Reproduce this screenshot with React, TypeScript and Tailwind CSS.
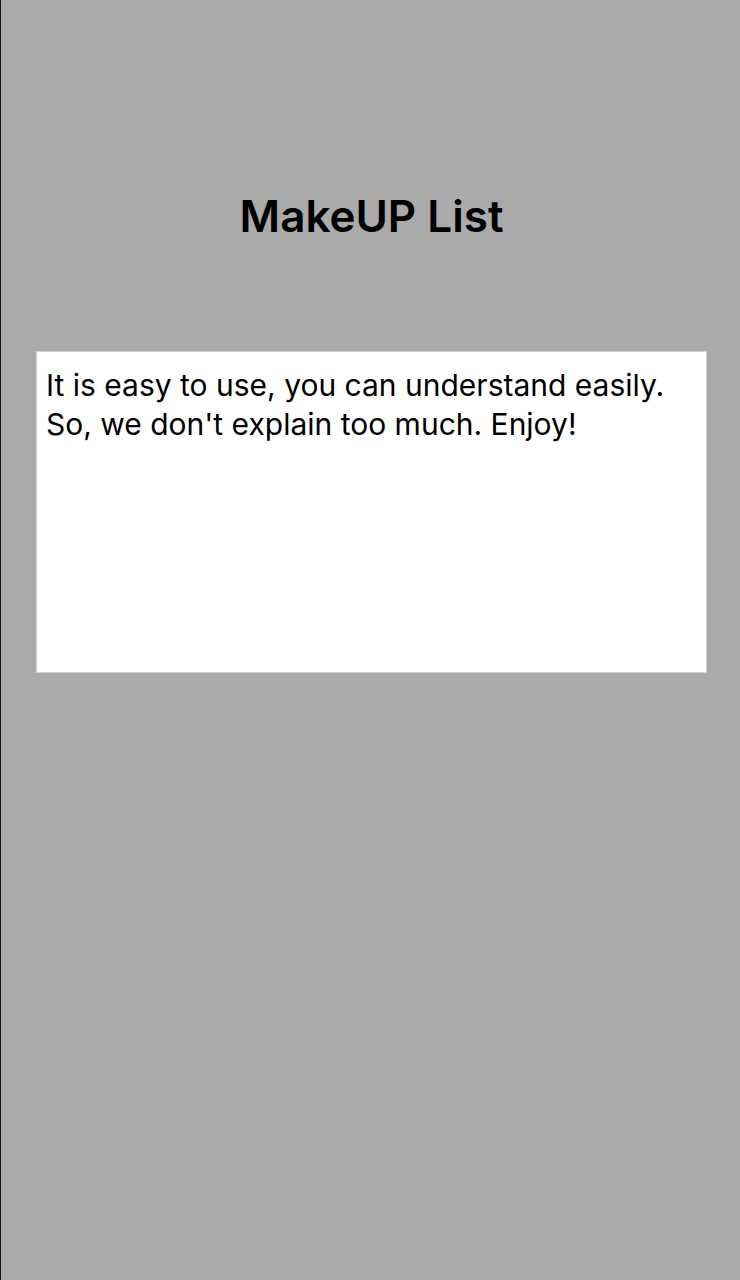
export default function App() {
  return (
    <main className="min-h-screen border-l border-[#111111] bg-[#aaaaaa] pt-[189px] pr-[33px] pl-[35px] font-['Inter','Liberation_Sans',sans-serif] text-black">
      <h1 className="text-center text-[44px] leading-[54px] font-semibold">MakeUP List</h1>
      <textarea
        aria-label="Description"
        className="mt-[108px] block h-[322px] w-full resize-none border border-[#d0d0d0] bg-white px-[9px] py-[14px] text-[30px] leading-[39px] outline-none"
        defaultValue={"It is easy to use, you can understand easily.\nSo, we don't explain too much. Enjoy!"}
      />
    </main>
  );
}
